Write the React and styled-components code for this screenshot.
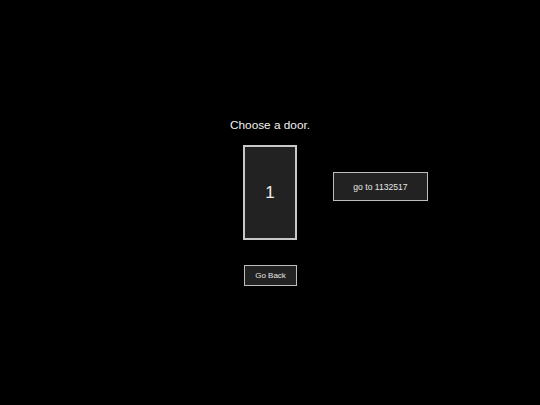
import React from "react";
import styled, { createGlobalStyle } from "styled-components";

const Global = createGlobalStyle`
  html, body {
    margin: 0;
    padding: 0;
    background: #000;
    height: 100%;
  }
  body {
    font-family: "Liberation Sans", Arial, sans-serif;
    color: #fff;
  }
`;

const Page = styled.div`
  width: 540px;
  height: 405px;
  background: #000;
  display: flex;
  flex-direction: column;
  align-items: center;
  padding-top: 118px;
  box-sizing: border-box;
`;

const Title = styled.div`
  font-size: 11.8px;
  line-height: 14px;
  color: #f2f2f2;
`;

const Row = styled.div`
  width: 100%;
  display: grid;
  grid-template-columns: 1fr 54px 1fr;
  margin-top: 13px;
`;

const Door = styled.div`
  grid-column: 2;
  width: 54px;
  height: 95px;
  box-sizing: border-box;
  border: 2px solid #c8c8c8;
  background: #222;
  display: flex;
  align-items: center;
  justify-content: center;
  font-size: 17px;
  color: #eee;
`;

const Side = styled.div`
  grid-column: 3;
  display: flex;
  align-items: flex-start;
`;

const Button = styled.button`
  box-sizing: border-box;
  width: ${(p) => p.$w}px;
  height: ${(p) => p.$h}px;
  margin: ${(p) => p.$m};
  border: 1px solid #bdbdbd;
  background: #222;
  color: #e6e6e6;
  font-family: "Liberation Sans", Arial, sans-serif;
  font-size: ${(p) => p.$fs}px;
  padding: 0;
  display: flex;
  align-items: center;
  justify-content: center;
  cursor: pointer;
`;

export default function App() {
  return (
    <>
      <Global />
      <Page>
        <Title>Choose a door.</Title>
        <Row>
          <Door>1</Door>
          <Side>
            <Button $w={95} $h={29} $fs={8.6} $m="27px 0 0 36px">
              go to 1132517
            </Button>
          </Side>
        </Row>
        <Button $w={53} $h={21} $fs={8} $m="25px 0 0 1px">
          Go Back
        </Button>
      </Page>
    </>
  );
}
